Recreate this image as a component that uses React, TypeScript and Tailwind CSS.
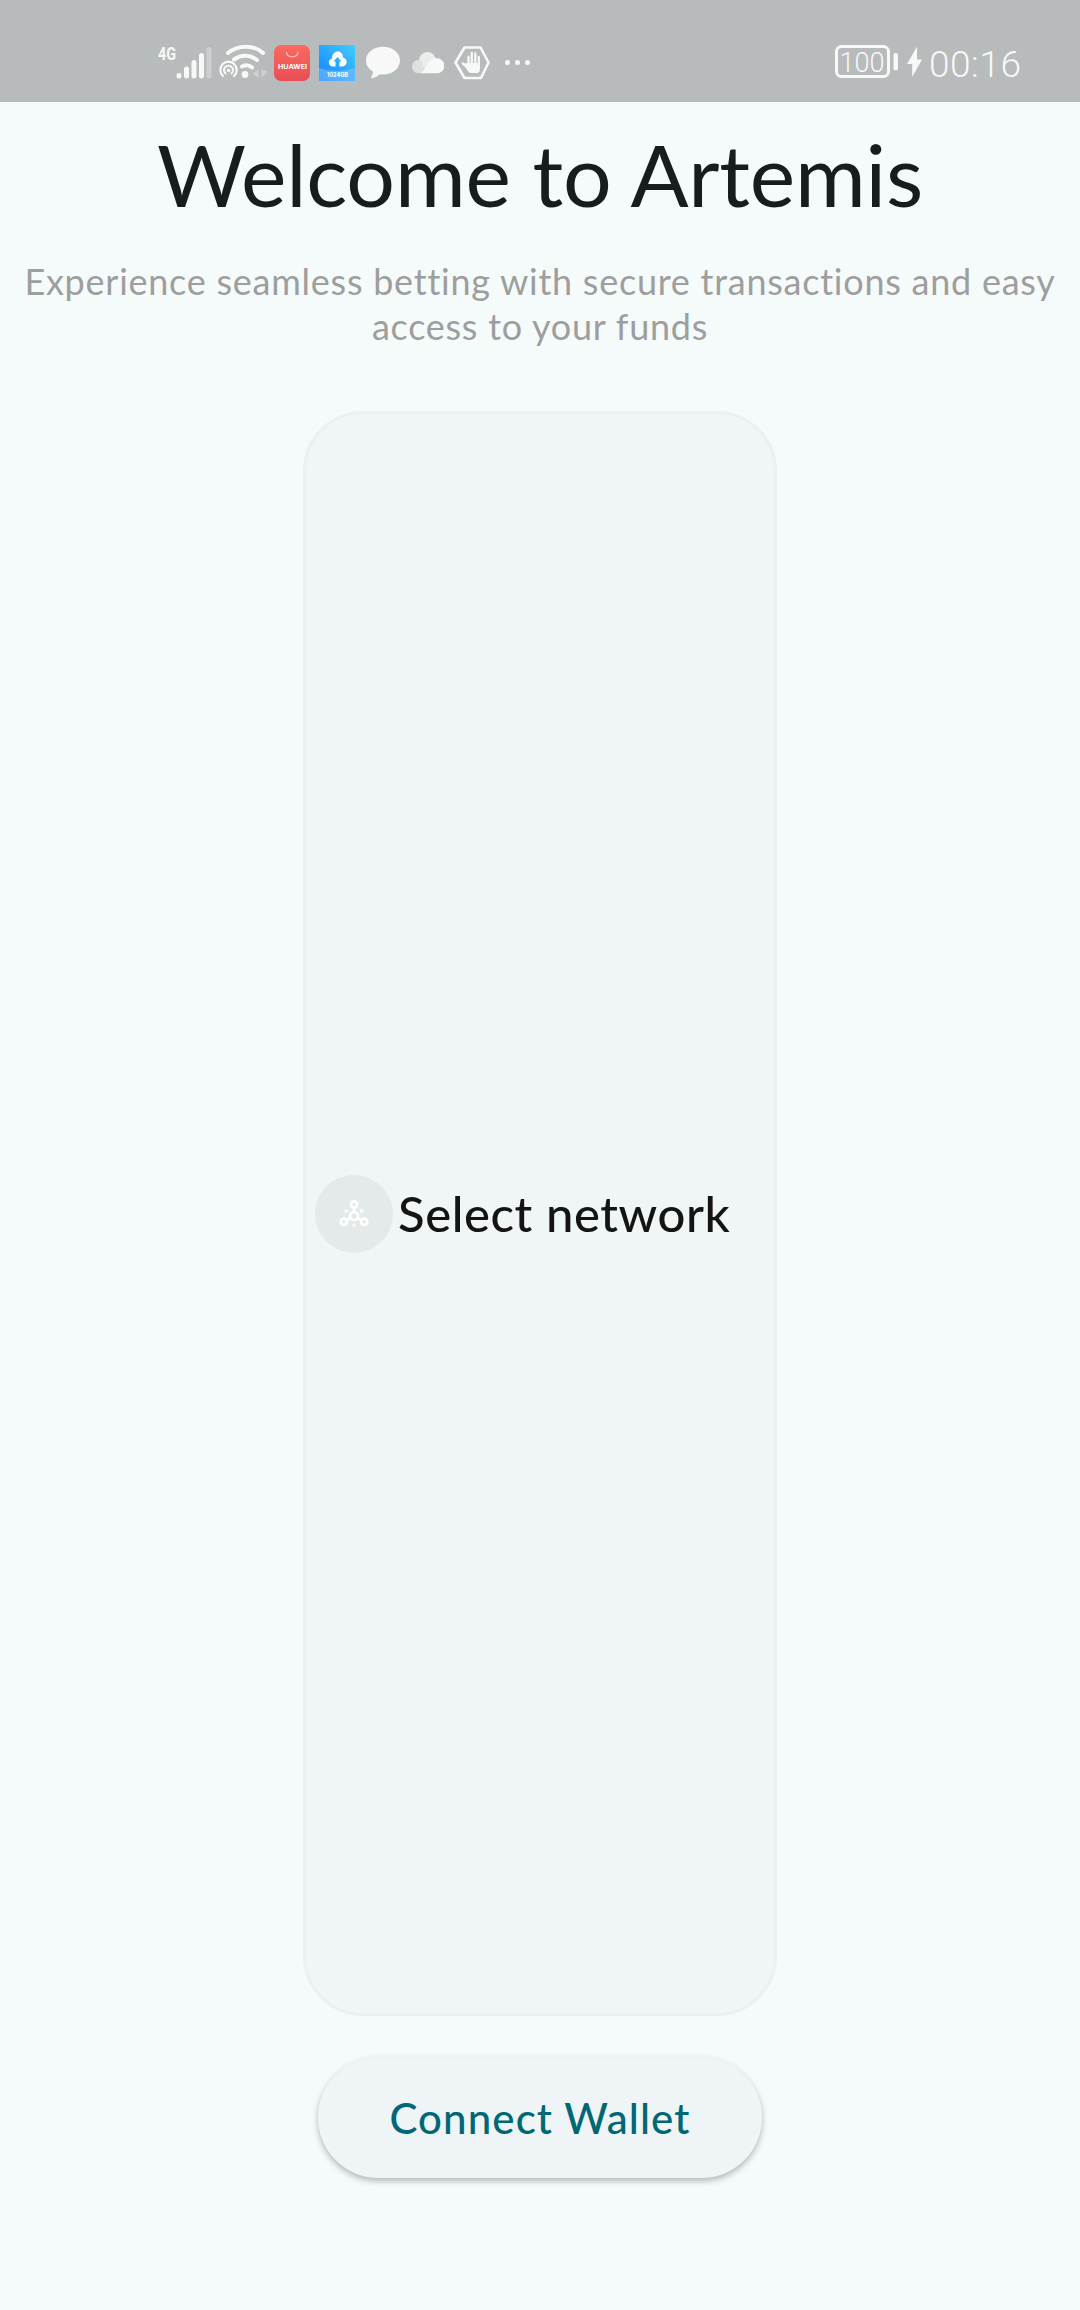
function Signal() {
  return (
    <svg width="55" height="38" viewBox="0 0 55 38" className="mt-6 overflow-visible">
      <text x="0" y="15.5" fontSize="19" fontWeight="700" fontFamily="Roboto, sans-serif" fill="#f8f8f8" textLength="18" lengthAdjust="spacingAndGlyphs">4G</text>
      <g stroke="#f8f8f8" strokeWidth="5" strokeLinecap="round">
        <path d="M21 31.5v.5M28.5 25v7M36 18.500v13.500M43.500 11.500v20.500" />
        <path d="M51 5.500v26.500" stroke="#cdd0d0" />
      </g>
    </svg>
  );
}

function Wifi() {
  return (
    <svg width="50" height="38" viewBox="0 0 50 38" className="ml-[5px] mt-6" fill="none" stroke="#f8f8f8" strokeLinecap="round">
      <path d="M10 9C20 .500 36 .500 45 9" strokeWidth="4" />
      <path d="M16 15.500C23 10.500 32 10.500 39 16" strokeWidth="4" />
      <path d="M24 22.500C28 20.500 31 21 34 23.500" strokeWidth="4" />
      <path d="M5 32A8.200 8.200 0 1 1 16 32" strokeWidth="2.200" />
      <path d="M7.500 29.500A4.500 4.500 0 1 1 13.500 29.500" strokeWidth="2" />
      <circle cx="10.500" cy="26.500" r="1.800" fill="#f8f8f8" stroke="none" />
      <circle cx="27" cy="30.500" r="3.400" fill="#f8f8f8" stroke="none" />
      <path d="M40.500 25.500v8.500l-6-4.500zM43.500 34v-8.500l6 2z" fill="#cdd0d0" stroke="none" />
    </svg>
  );
}

function AppGallery() {
  return (
    <svg width="36" height="36" viewBox="0 0 36 36" className="ml-1.5 mt-6">
      <defs>
        <linearGradient id="gallery" x1="0" y1="0" x2="0" y2="1">
          <stop offset="0" stopColor="#fb6a61" />
          <stop offset="1" stopColor="#e84e55" />
        </linearGradient>
      </defs>
      <rect width="36" height="36" rx="7" fill="url(#gallery)" />
      <path d="M12.500 7.500a5.800 5 0 0 0 11.500 0" fill="none" stroke="#ffc0b8" strokeWidth="1.300" strokeLinecap="round" />
      <text x="4" y="23.500" fontSize="6.800" fontWeight="700" fontFamily="Inter, sans-serif" fill="#fff" textLength="29" lengthAdjust="spacingAndGlyphs">HUAWEI</text>
    </svg>
  );
}

function CloudStorage() {
  return (
    <svg width="36" height="36" viewBox="0 0 36 36" className="ml-[9px] mt-6">
      <defs>
        <linearGradient id="storage" x1="0" y1="1" x2="1" y2="0">
          <stop offset="0" stopColor="#1480ff" />
          <stop offset="1" stopColor="#42ceff" />
        </linearGradient>
      </defs>
      <rect width="36" height="36" fill="url(#storage)" />
      <path d="M0 23Q18 29 36 23V36H0z" fill="#8cc8ff" fillOpacity=".5" />
      <path d="M14 21.500C9 21.500 8.500 14.500 13 13.500C13 4.500 24 4.500 24 12.500C29.500 14 28.500 21.500 23 21.500H20.500V16.500H22.500L18.500 12L14.500 16.500H16.500V21.500z" fill="#fff" />
      <text x="8" y="32.200" fontSize="5.800" fontWeight="700" fontFamily="Inter, sans-serif" fill="#fff" textLength="21" lengthAdjust="spacingAndGlyphs">1024GB</text>
    </svg>
  );
}

function Bubble() {
  return (
    <svg width="34" height="34" viewBox="0 0 34 34" className="ml-[11px] mt-6">
      <path d="M17 .800C7.500.800 0 6.800 0 14.500c0 4.500 2.500 8.500 7 11-.200 2.500-.800 4-1.700 5.500-.500 1 .200 1.500 1 1.300 3-.700 5.500-2.200 7.500-4 1 .200 2 .300 3.200.300 9.500 0 17-6.300 17-14.100S26.500.800 17 .800z" fill="#f8f8f8" />
    </svg>
  );
}

function Clouds() {
  return (
    <svg width="32" height="22" viewBox="0 0 32 22" className="ml-3 mt-6">
      <circle cx="15.500" cy="8.500" r="8.500" fill="#ececec" />
      <path d="M9.500 8.700C3.500 6.500 0 10.500 0 14.800 0 18.700 3 21.200 6.500 21.200H13z" fill="#dfe1e1" />
      <path d="M9 21.200C12.500 18 13 14.500 16.500 10.500C18.500 7.500 21.500 6.300 25 6.300A7.400 7.400 0 0 1 25 21.200z" fill="#f8f8f8" />
    </svg>
  );
}

function BlockedHand() {
  return (
    <svg width="36" height="36" viewBox="0 0 36 36" className="ml-[10px] mt-6">
      <path d="M10.500 2.500h16L34.500 17.500 27 33H10.500L1.500 17.500z" fill="none" stroke="#f8f8f8" strokeWidth="2.600" strokeLinejoin="round" />
      <path d="M8.800 18.500l6 5M14.500 12V20M17.800 7.800V20M21.300 8.500V20M24.800 12V22" fill="none" stroke="#f8f8f8" strokeWidth="2.300" strokeLinecap="round" />
      <path d="M13.400 18H25.900V24Q25.900 28 23 28H16.500Q15 28 13.500 25.500L9 19z" fill="#f8f8f8" />
    </svg>
  );
}

function StatusBar() {
  return (
    <header className="flex h-[102px] w-full items-center bg-[#b7bbbb] pl-[158px] pr-[60px]">
      <div className="flex items-center">
        <Signal />
        <Wifi />
        <AppGallery />
        <CloudStorage />
        <Bubble />
        <Clouds />
        <BlockedHand />
        <div className="ml-[15px] mt-[22px] flex gap-[5px]">
          <i className="size-[5px] rounded-full bg-[#f8f8f8]" />
          <i className="size-[5px] rounded-full bg-[#f8f8f8]" />
          <i className="size-[5px] rounded-full bg-[#f8f8f8]" />
        </div>
      </div>
      <svg width="186" height="38" viewBox="0 0 186 38" className="ml-auto mt-6 overflow-visible" fill="#f8f8f8">
        <rect x="2.500" y="2.500" width="52" height="30" rx="5" fill="none" stroke="#f8f8f8" strokeWidth="3" />
        <rect x="59.500" y="9" width="4.500" height="17.500" rx="2.250" />
        <path d="M83 2.500L73 20h5.200V33L88 15.500h-5z" />
        <text x="5.500" y="28" fontSize="28" fontWeight="300" fontFamily="Roboto, sans-serif" textLength="45" lengthAdjust="spacingAndGlyphs">100</text>
        <text x="95" y="33" fontSize="37" fontWeight="300" fontFamily="Roboto, sans-serif" textLength="92" lengthAdjust="spacing">00:16</text>
      </svg>
    </header>
  );
}

function NetworkIcon() {
  return (
    <svg width="30" height="30" viewBox="0 0 30 30" fill="none" stroke="#fff" strokeWidth="2.700">
      <circle cx="15" cy="5.500" r="3.100" />
      <circle cx="15" cy="17" r="4" />
      <circle cx="4.800" cy="22.800" r="3.100" />
      <circle cx="25.200" cy="22.800" r="3.100" />
      <path d="M15 8.500V13M11.500 19L7.500 21M18.500 19L22.500 21" />
      <g fill="#f6f8f8" stroke="none">
        <circle cx="7.300" cy="12.200" r="2.100" />
        <circle cx="22.700" cy="12.200" r="2.100" />
        <circle cx="15" cy="26.500" r="2" />
      </g>
    </svg>
  );
}

export default function App() {
  return (
    <div className="flex h-[2310px] w-[1080px] flex-col items-center overflow-hidden bg-[#f5fbfb] font-['Lato',sans-serif] [font-variant-ligatures:none]">
      <StatusBar />
      <h1 className="mt-[22px] whitespace-nowrap text-[86px] leading-[100px] tracking-[-0.2px] text-[#191c1d]">Welcome to Artemis</h1>
      <p className="mt-[35px] whitespace-nowrap text-center text-[36px] leading-[45px] tracking-[0.75px] text-[#9e9e9e]">
        <span className="block">Experience seamless betting with secure transactions and easy</span>
        <span className="block">access to your funds</span>
      </p>
      <section className="mt-[62px] flex h-[1605px] w-[474px] shrink-0 items-center rounded-[60px] border-[3px] border-[#ebf0f0] bg-[#f0f5f5] pl-[9px]">
        <div className="flex size-[78px] shrink-0 items-center justify-center rounded-full bg-[#e4e9e9]">
          <NetworkIcon />
        </div>
        <span className="-mt-0.5 ml-[5px] whitespace-nowrap text-[49px] font-medium leading-[60px] tracking-[0.6px] text-[#141414]">Select network</span>
      </section>
      <button className="mt-[41px] h-[121px] w-[444px] shrink-0 whitespace-nowrap rounded-full bg-[#eff4f7] text-[42px] font-medium leading-[50px] tracking-[1.1px] text-[#006874] shadow-[0_3px_6px_rgba(0,0,0,0.28)]">
        Connect Wallet
      </button>
    </div>
  );
}
